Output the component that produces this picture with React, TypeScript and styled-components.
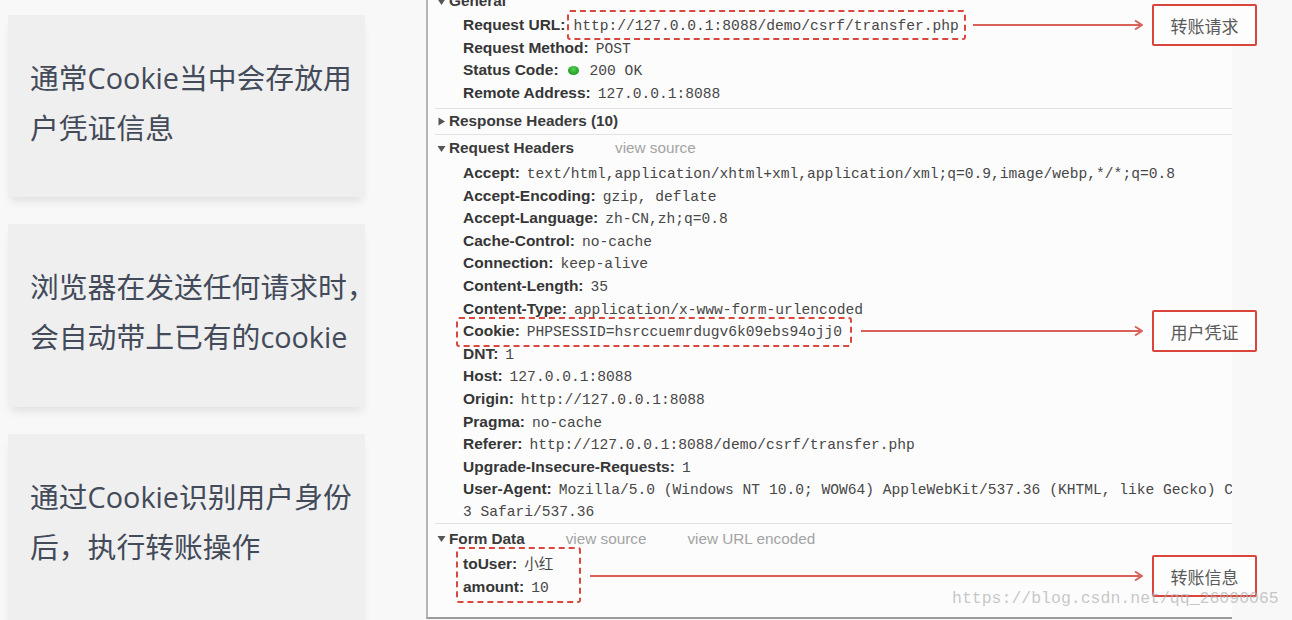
import React from "react";
import styled, { createGlobalStyle } from "styled-components";

const GlobalStyle = createGlobalStyle`
  html, body {
    margin: 0;
    padding: 0;
    background: #f8f8f8;
    overflow: hidden;
  }
  body {
    font-family: "Liberation Sans", Arial, sans-serif;
  }
`;

const RED = "#d9483f";

const Page = styled.div`
  position: relative;
  display: flex;
  width: 1292px;
  height: 620px;
  overflow: hidden;
  background: #f8f8f8;
`;

/* left: the three explanation cards */

const LeftColumn = styled.div`
  display: flex;
  flex-direction: column;
  gap: 27px;
  width: 357px;
  margin-left: 8px;
  padding-top: 15px;
  flex-shrink: 0;
`;

const Card = styled.div<{ $h: number }>`
  height: ${(p) => p.$h}px;
  flex-shrink: 0;
  box-sizing: border-box;
  padding: 38px 0 0 22px;
  background: #efefef;
  box-shadow: 0 7px 9px -3px rgba(0, 0, 0, 0.1);
`;

const CardText = styled.p`
  margin: 0;
  font-family: "Open Sans", "Noto Sans CJK SC", sans-serif;
  font-size: 28.8px;
  line-height: 50px;
  color: #434a59;
  white-space: nowrap;
`;

/* right: devtools headers panel */

const Panel = styled.div`
  width: 806px;
  height: 631px;
  margin: -12px 0 0 61px;
  box-sizing: border-box;
  padding-left: 7px;
  border-left: 2px solid #b4b4b4;
  border-bottom: 2px solid #9a9a9a;
  background: #fcfcfc;
  flex-shrink: 0;
`;

const Section = styled.div<{ $pb?: number }>`
  padding-bottom: ${(p) => p.$pb ?? 0}px;
  & + & {
    border-top: 1px solid #e2e2e2;
  }
`;

const SectionHead = styled.div<{ $h: number }>`
  display: flex;
  align-items: center;
  height: ${(p) => p.$h}px;
  padding-left: 2px;
  white-space: nowrap;
`;

const Caret = styled.svg`
  width: 9px;
  height: 9px;
  margin-right: 3px;
  flex-shrink: 0;
`;

const SectionTitle = styled.span`
  font-size: 15.3px;
  font-weight: bold;
  color: #3a3a3a;
`;

const HeadLink = styled.span`
  margin-left: 41px;
  font-size: 15.3px;
  color: #a3a3a3;
`;

const Row = styled.div<{ $indent?: number; $open?: boolean }>`
  display: flex;
  align-items: baseline;
  height: 22.6px;
  padding-left: ${(p) => p.$indent ?? 28}px;
  white-space: nowrap;
  overflow: ${(p) => (p.$open ? "visible" : "hidden")};
  margin-right: ${(p) => (p.$open ? "-25px" : "0")};
`;

const Label = styled.span`
  margin-right: 7px;
  font-size: 15.5px;
  line-height: 22.6px;
  font-weight: bold;
  color: #363636;
`;

const Value = styled.span`
  font-family: "Liberation Mono", "Noto Sans CJK SC", monospace;
  font-size: 14.6px;
  line-height: 22.6px;
  color: #474747;
`;

const StatusDot = styled.span`
  align-self: center;
  width: 11px;
  height: 9px;
  margin: 0 11px 0 2px;
  border-radius: 50%;
  background: radial-gradient(circle at 50% 35%, #55d255 0%, #1f9a1f 75%);
  flex-shrink: 0;
`;

const DashedBox = styled.div`
  display: flex;
  align-items: baseline;
  box-sizing: border-box;
  border: 2px dashed ${RED};
  border-radius: 3px;
  flex-shrink: 0;
`;

/* the box hangs 3.5px above the row and sits on the row's baseline */
const UrlBox = styled(DashedBox)`
  margin: -4px 0 0 -5px;
  padding: 3px 5px 0 4px;
`;

const CookieBox = styled(DashedBox)`
  margin: -3.5px 0 0 -7px;
  padding: 1.5px 8px 1.5px 5px;
`;

const FormBox = styled(DashedBox)`
  display: block;
  width: 125px;
  margin: -6px 0 -4px 0;
  padding: 4px 0 2px 0;
`;

const FormGroup = styled.div`
  display: flex;
  align-items: center;
  padding-left: 21px;
  margin-right: -25px;
`;

const ArrowWrap = styled.div<{ $from: number }>`
  display: flex;
  align-items: center;
  align-self: center;
  flex: 1;
  height: 12px;
  margin: 0 9px 0 ${(p) => p.$from}px;
`;

const ArrowLine = styled.div`
  flex: 1;
  height: 2px;
  background: #d8625a;
`;

const ArrowHead = styled.svg`
  width: 10px;
  height: 12px;
  flex-shrink: 0;
`;

const Callout = styled.div`
  display: flex;
  align-items: center;
  align-self: center;
  justify-content: center;
  width: 105px;
  height: 42px;
  box-sizing: border-box;
  flex-shrink: 0;
  border: 2px solid #d9443b;
  border-radius: 2px;
  background: #fdfdfd;
  font-family: "Noto Sans CJK SC", sans-serif;
  font-size: 17px;
  color: #5a5a5a;
`;

const Watermark = styled.div`
  position: absolute;
  left: 952px;
  top: 589px;
  font-family: "Liberation Mono", monospace;
  font-size: 16.5px;
  color: rgba(175, 175, 175, 0.7);
  white-space: nowrap;
  pointer-events: none;
`;

function Arrow({ from = 9 }: { from?: number }) {
  return (
    <ArrowWrap $from={from}>
      <ArrowLine />
      <ArrowHead viewBox="0 0 10 12">
        <path d="M0 6 H9 M2 1.5 L9 6 L2 10.5" stroke="#d8625a" strokeWidth="2" fill="none" />
      </ArrowHead>
    </ArrowWrap>
  );
}

function Head({
  title,
  h,
  open = true,
  links = [],
}: {
  title: string;
  h: number;
  open?: boolean;
  links?: string[];
}) {
  return (
    <SectionHead $h={h}>
      <Caret viewBox="0 0 9 9">
        {open ? (
          <polygon points="0.5,2 8.5,2 4.5,8" fill="#555" />
        ) : (
          <polygon points="1.5,0.5 8,4.5 1.5,8.5" fill="#555" />
        )}
      </Caret>
      <SectionTitle>{title}</SectionTitle>
      {links.map((l) => (
        <HeadLink key={l}>{l}</HeadLink>
      ))}
    </SectionHead>
  );
}

const requestHeaders: [string, string][] = [
  ["Accept:", "text/html,application/xhtml+xml,application/xml;q=0.9,image/webp,*/*;q=0.8"],
  ["Accept-Encoding:", "gzip, deflate"],
  ["Accept-Language:", "zh-CN,zh;q=0.8"],
  ["Cache-Control:", "no-cache"],
  ["Connection:", "keep-alive"],
  ["Content-Length:", "35"],
  ["Content-Type:", "application/x-www-form-urlencoded"],
];

const moreHeaders: [string, string][] = [
  ["DNT:", "1"],
  ["Host:", "127.0.0.1:8088"],
  ["Origin:", "http://127.0.0.1:8088"],
  ["Pragma:", "no-cache"],
  ["Referer:", "http://127.0.0.1:8088/demo/csrf/transfer.php"],
  ["Upgrade-Insecure-Requests:", "1"],
  [
    "User-Agent:",
    "Mozilla/5.0 (Windows NT 10.0; WOW64) AppleWebKit/537.36 (KHTML, like Gecko) Chrome/55.0.2883.87",
  ],
];

export default function App() {
  return (
    <>
      <GlobalStyle />
      <Page>
        <LeftColumn>
          <Card $h={182}>
            <CardText>
              通常Cookie当中会存放用
              <br />
              户凭证信息
            </CardText>
          </Card>
          <Card $h={183}>
            <CardText>
              浏览器在发送任何请求时，
              <br />
              会自动带上已有的cookie
            </CardText>
          </Card>
          <Card $h={200}>
            <CardText>
              通过Cookie识别用户身份
              <br />
              后，执行转账操作
            </CardText>
          </Card>
        </LeftColumn>

        <Panel>
          <Section $pb={3.6}>
            <Head title="General" h={26} />
            <Row $open>
              <Label>Request URL:</Label>
              <UrlBox>
                <Value>http://127.0.0.1:8088/demo/csrf/transfer.php</Value>
              </UrlBox>
              <Arrow from={7} />
              <Callout>转账请求</Callout>
            </Row>
            <Row>
              <Label>Request Method:</Label>
              <Value>POST</Value>
            </Row>
            <Row>
              <Label>Status Code:</Label>
              <StatusDot />
              <Value>200 OK</Value>
            </Row>
            <Row>
              <Label>Remote Address:</Label>
              <Value>127.0.0.1:8088</Value>
            </Row>
          </Section>

          <Section>
            <Head title="Response Headers (10)" h={25} open={false} />
          </Section>

          <Section>
            <Head title="Request Headers" h={27} links={["view source"]} />
            {requestHeaders.map(([k, v]) => (
              <Row key={k}>
                <Label>{k}</Label>
                <Value>{v}</Value>
              </Row>
            ))}
            <Row $open>
              <CookieBox>
                <Label>Cookie:</Label>
                <Value>PHPSESSID=hsrccuemrdugv6k09ebs94ojj0</Value>
              </CookieBox>
              <Arrow />
              <Callout>用户凭证</Callout>
            </Row>
            {moreHeaders.map(([k, v]) => (
              <Row key={k}>
                <Label>{k}</Label>
                <Value>{v}</Value>
              </Row>
            ))}
            <Row>
              <Value>3 Safari/537.36</Value>
            </Row>
          </Section>

          <Section>
            <Head title="Form Data" h={29} links={["view source", "view URL encoded"]} />
            <FormGroup>
              <FormBox>
                <Row $indent={5}>
                  <Label>toUser:</Label>
                  <Value>小红</Value>
                </Row>
                <Row $indent={5}>
                  <Label>amount:</Label>
                  <Value>10</Value>
                </Row>
              </FormBox>
              <Arrow />
              <Callout>转账信息</Callout>
            </FormGroup>
          </Section>
        </Panel>

        <Watermark>https://blog.csdn.net/qq_26090065</Watermark>
      </Page>
    </>
  );
}
